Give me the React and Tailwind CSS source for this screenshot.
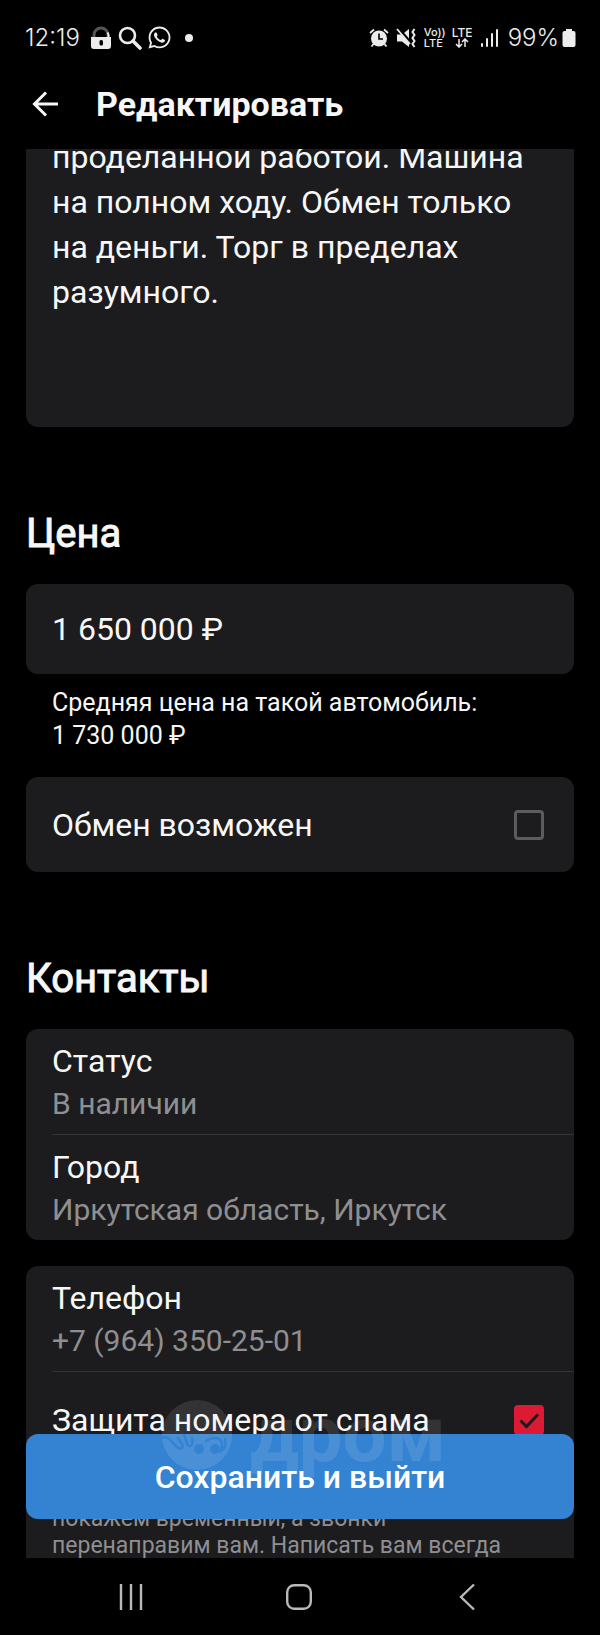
import React, { useState } from "react";
import { FaWhatsapp } from "react-icons/fa";

const DESCRIPTION =
  "проделанной работой. Машина на полном ходу. Обмен только на деньги. Торг в пределах разумного.";

function StatusBar() {
  return (
    <div className="flex h-[75px] items-center justify-between pl-[25px] pr-6 text-[#ececec] font-['Inter',sans-serif]">
      <div className="flex items-center">
        <span className="w-[64px] text-[24px] font-light">12:19</span>
        {/* Lock */}
        <svg width="22" height="24" viewBox="0 0 22 24" className="ml-[1px]">
          <path d="M4 12V9a7 7 0 0 1 14 0V12" fill="none" stroke="#555" strokeWidth="3" />
          <path d="M17.500 6.500a7 7 0 0 1 1 5" fill="none" stroke="currentColor" strokeWidth="2" />
          <path d="M1 11h20v9a3 3 0 0 1-3 3H4a3 3 0 0 1-3-3z" fill="currentColor" />
          <rect x="9.500" y="14" width="3.500" height="5.500" rx="1.500" fill="#000" />
        </svg>
        {/* Search */}
        <svg width="24" height="24" viewBox="0 0 24 24" className="ml-[6px]" fill="none" stroke="currentColor">
          <circle cx="9.500" cy="9.500" r="7.500" strokeWidth="2.600" />
          <path d="M15 15l7 7" strokeWidth="3.600" strokeLinecap="round" />
        </svg>
        <FaWhatsapp size={25} className="ml-[5px]" />
        <span className="ml-[13px] h-2 w-2 rounded-full bg-current" />
      </div>
      <div className="flex items-center">
        {/* Alarm */}
        <svg width="20" height="20" viewBox="0 0 20 20" fill="none" stroke="currentColor">
          <circle cx="10" cy="10.500" r="8" fill="currentColor" stroke="none" />
          <path d="M1 5l4-3.500M19 5l-4-3.500M4.500 16l-2 2.500M15.500 16l2 2.500" strokeWidth="1.800" />
          <path d="M10 5.500v5.500h4" stroke="#000" strokeWidth="1.600" />
        </svg>
        {/* Vibrate, sound off */}
        <svg width="20" height="20" viewBox="0 0 20 20" className="ml-[7px]" fill="none" stroke="currentColor">
          <path d="M1 6.500h5L13 1v18l-7-5.500H1z" fill="currentColor" stroke="none" />
          <path d="M2 0l12 14" stroke="#000" strokeWidth="3" />
          <path d="M1 1l13 15" strokeWidth="1.800" />
          <path d="M18.500 1l-2 3 2 3-2 3 2 3-2 3 2 3" strokeWidth="2" />
        </svg>
        <div className="ml-2 flex flex-col text-[11px] font-medium leading-[11px]">
          <span>Vo))</span>
          <span>LTE</span>
        </div>
        <div className="ml-[5px] flex w-[23px] flex-col items-center text-[12px] font-medium leading-[11px]">
          <span>LTE</span>
          <svg width="14" height="10" viewBox="0 0 14 10" fill="none" stroke="currentColor" strokeWidth="1.500">
            <path d="M4 1v8M1 6l3 3 3-3M10 9V1M7 4l3-3 3 3" />
          </svg>
        </div>
        {/* Signal */}
        <svg width="18" height="20" viewBox="0 0 18 20" className="ml-[7px]" fill="currentColor">
          <rect x="0" y="15" width="2" height="4" rx="1" />
          <rect x="5" y="10" width="2" height="9" rx="1" />
          <rect x="10" y="5" width="2" height="14" rx="1" />
          <rect x="15" y="1" width="2" height="18" rx="1" />
        </svg>
        <span className="ml-[9px] text-[24px] font-light">99%</span>
        <svg width="14" height="20" viewBox="0 0 14 20" className="ml-[3px]" fill="currentColor">
          <path d="M4 1h6v2h1.500A2 2 0 0 1 13.500 5v12a2 2 0 0 1-2 2h-9a2 2 0 0 1-2-2V5a2 2 0 0 1 2-2H4z" />
        </svg>
      </div>
    </div>
  );
}

function Header() {
  return (
    <header className="flex h-[74px] items-center px-8 pb-[17px]">
      <button type="button" aria-label="Назад" className="mr-[37px]">
        <svg width="27" height="26" viewBox="0 0 27 26" fill="none" stroke="currentColor" strokeWidth="3">
          <path d="M26 13H2.500M14 1.500L2.500 13 14 24.500" />
        </svg>
      </button>
      <h1 className="text-[34px] font-bold leading-[44px]">Редактировать</h1>
    </header>
  );
}

function SectionTitle({ children }) {
  return (
    <h2 className="text-[40px] leading-[50px] [-webkit-text-stroke:1px_currentColor]">
      {children}
    </h2>
  );
}

function Field({ label, value }) {
  return (
    <div className="pt-[10px] pb-[9px]">
      <div className="text-[32px] leading-[44px]">{label}</div>
      <div className="text-[30px] leading-[42px] text-[#8f8f92]">{value}</div>
    </div>
  );
}

function CheckRow({ label, checked, onChange }) {
  return (
    <label className="flex h-[95px] items-center justify-between pr-[30px] text-[32px]">
      {label}
      <span className="relative flex h-[30px] w-[30px]">
        <input
          type="checkbox"
          checked={checked}
          onChange={onChange}
          className="h-[30px] w-[30px] appearance-none rounded-[4px] border-[3px] border-[#5c5c5e] checked:border-[#dc1a34] checked:bg-[#dc1a34]"
        />
        {checked && (
          <svg
            viewBox="0 0 30 30"
            className="pointer-events-none absolute inset-0"
            fill="none"
            stroke="#1c1c1e"
            strokeWidth="3"
          >
            <path d="M6.500 15.500l6 6L24 9.500" />
          </svg>
        )}
      </span>
    </label>
  );
}

function Watermark() {
  return (
    <div className="pointer-events-none absolute bottom-[88px] left-[162px] flex items-center opacity-10">
      <svg width="70" height="70" viewBox="0 0 70 70">
        <mask id="drom-car">
          <rect width="70" height="70" fill="#fff" />
          <g fill="none" stroke="#000" strokeWidth="2.500" strokeLinecap="round">
            <path d="M0 38C5 36 8 39 10 42L15 47C18 50 22 48 20 44L16 38" />
            <path d="M22 35C24 38 24 44 27 46C31 46 31 42 30 38" />
            <path d="M44 41C50 37 57 37 59 41C61 44 60 48 59 51C63 49 64 44 63 39" />
          </g>
          <circle cx="37" cy="49" r="5" fill="#000" />
          <circle cx="53" cy="49" r="5" fill="#000" />
        </mask>
        <circle cx="35" cy="35" r="35" fill="#fff" mask="url(#drom-car)" />
      </svg>
      <span className="ml-[18px] text-[78px] font-bold leading-[70px]">дром</span>
    </div>
  );
}

function SystemNav() {
  return (
    <nav className="flex h-[77px] items-center justify-between pl-[119px] pr-[125px] text-[#b9b9b9]">
      <button type="button" aria-label="Недавние">
        <svg width="24" height="26" viewBox="0 0 24 26" stroke="currentColor" strokeWidth="2.400">
          <path d="M2 0v26M12 0v26M22 0v26" />
        </svg>
      </button>
      <button type="button" aria-label="Домой">
        <svg width="26" height="26" viewBox="0 0 26 26" fill="none" stroke="currentColor" strokeWidth="2.400">
          <rect x="1.200" y="1.200" width="23.600" height="23.600" rx="7" />
        </svg>
      </button>
      <button type="button" aria-label="Назад" className="flex w-5 justify-end">
        <svg width="16" height="28" viewBox="0 0 16 28" fill="none" stroke="currentColor" strokeWidth="2.400">
          <path d="M15 1.500L2 14l13 12.500" />
        </svg>
      </button>
    </nav>
  );
}

export default function App() {
  const [description, setDescription] = useState(DESCRIPTION);
  const [price, setPrice] = useState("1 650 000 ₽");
  const [exchange, setExchange] = useState(false);
  const [spamProtection, setSpamProtection] = useState(true);

  return (
    <div className="flex h-screen flex-col bg-black text-[#f7f7f7] font-['Roboto',sans-serif]">
      <StatusBar />
      <Header />

      <div className="relative min-h-0 flex-1">
        <main className="h-full overflow-hidden px-[26px]">
          {/* Description, scrolled under the header */}
          <textarea
            aria-label="Описание"
            value={description}
            onChange={(e) => setDescription(e.target.value)}
            className="-mt-[14px] block h-[292px] w-full resize-none overflow-hidden rounded-b-xl bg-[#1c1c1e] px-[26px] text-[32px] leading-[45px] outline-none"
          />

          <section className="mt-[82px]">
            <SectionTitle>Цена</SectionTitle>
            <input
              type="text"
              aria-label="Цена"
              value={price}
              onChange={(e) => setPrice(e.target.value)}
              className="mt-[25px] block h-[90px] w-full rounded-xl bg-[#1c1c1e] px-[26px] text-[32px] outline-none"
            />
            <p className="px-[26px] pt-3 text-[25px] leading-[33px]">
              Средняя цена на такой автомобиль:
              <br />1 730 000 ₽
            </p>
            <div className="mt-[25px] rounded-xl bg-[#1c1c1e] pl-[26px]">
              <CheckRow
                label="Обмен возможен"
                checked={exchange}
                onChange={(e) => setExchange(e.target.checked)}
              />
            </div>
          </section>

          <section className="mt-[82px]">
            <SectionTitle>Контакты</SectionTitle>
            <div className="mt-[25px] divide-y divide-[#343436] rounded-xl bg-[#1c1c1e] pl-[26px]">
              <Field label="Статус" value="В наличии" />
              <Field label="Город" value="Иркутская область, Иркутск" />
            </div>

            <div className="mt-[26px] divide-y divide-[#343436] rounded-xl bg-[#1c1c1e] pl-[26px]">
              <Field label="Телефон" value="+7 (964) 350-25-01" />
              <div>
                <CheckRow
                  label="Защита номера от спама"
                  checked={spamProtection}
                  onChange={(e) => setSpamProtection(e.target.checked)}
                />
                <p className="pt-[38px] pb-6 text-[23px] leading-[27px] text-[#8f8f92]">
                  покажем временный, а звонки
                  <br />
                  перенаправим вам. Написать вам всегда
                </p>
              </div>
            </div>
          </section>
        </main>

        <button
          type="button"
          className="absolute inset-x-[26px] bottom-[39px] h-[85px] rounded-xl bg-[#3483d3] text-[32px] font-medium text-white"
        >
          Сохранить и выйти
        </button>
        <Watermark />
      </div>

      <SystemNav />
    </div>
  );
}
